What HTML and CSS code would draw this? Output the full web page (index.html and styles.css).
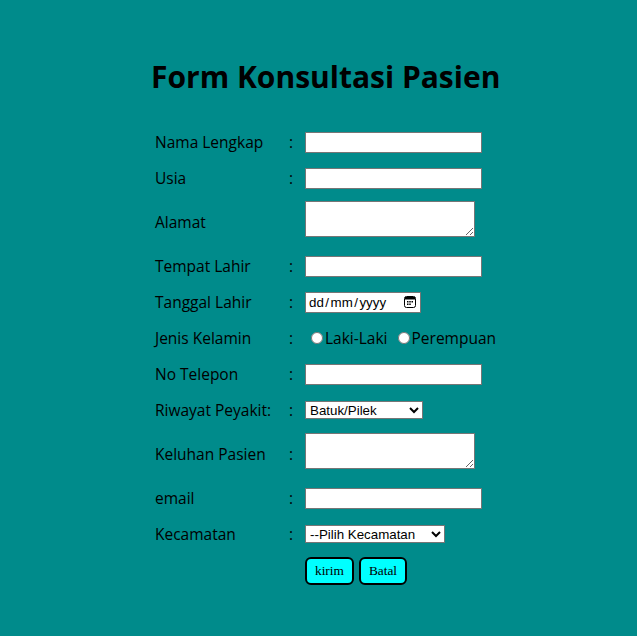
FILE: index.html
```html
<!DOCTYPE html>
<html>
<head>
<meta charset="utf-8">
<title>Form Konsultasi Pasien</title>
<link rel="stylesheet" href="styles.css">
</head>
<body>
<div class="wrap">
  <h1 class="title">Form Konsultasi Pasien</h1>
  <form class="form">
    <table class="grid">
      <tr>
        <td class="lbl">Nama Lengkap</td><td class="sep">:</td>
        <td class="fld"><input type="text" class="txt"></td>
      </tr>
      <tr>
        <td class="lbl">Usia</td><td class="sep">:</td>
        <td class="fld"><input type="text" class="txt"></td>
      </tr>
      <tr>
        <td class="lbl">Alamat</td><td class="sep"></td>
        <td class="fld area"><textarea class="ta"></textarea></td>
      </tr>
      <tr>
        <td class="lbl">Tempat Lahir</td><td class="sep">:</td>
        <td class="fld"><input type="text" class="txt"></td>
      </tr>
      <tr>
        <td class="lbl">Tanggal Lahir</td><td class="sep">:</td>
        <td class="fld">
          <div class="date" tabindex="0">
            <span class="seg">dd</span><span class="slash">/</span><span class="seg">mm</span><span class="slash">/</span><span class="seg">yyyy</span>
            <svg class="cal" width="12" height="12" viewBox="0 0 12 12">
              <rect x="0.5" y="0.5" width="11" height="11" rx="2" ry="2" fill="none" stroke="#000" stroke-width="1"/>
              <rect x="1" y="1" width="10" height="2.5" fill="#000"/>
              <rect x="3" y="5" width="1.5" height="1.5" fill="#000"/>
              <rect x="5.25" y="5" width="1.5" height="1.5" fill="#000"/>
              <rect x="7.5" y="5" width="1.5" height="1.5" fill="#000"/>
              <rect x="3" y="7.5" width="1.5" height="1.5" fill="#000"/>
              <rect x="5.25" y="7.5" width="1.5" height="1.5" fill="#000"/>
            </svg>
          </div>
        </td>
      </tr>
      <tr>
        <td class="lbl">Jenis Kelamin</td><td class="sep">:</td>
        <td class="fld radios">
          <label class="opt"><input type="radio" name="jk" class="rad">Laki-Laki</label>
          <label class="opt"><input type="radio" name="jk" class="rad">Perempuan</label>
        </td>
      </tr>
      <tr>
        <td class="lbl">No Telepon</td><td class="sep">:</td>
        <td class="fld"><input type="text" class="txt"></td>
      </tr>
      <tr>
        <td class="lbl">Riwayat Peyakit:</td><td class="sep">:</td>
        <td class="fld">
          <select class="sel sel-a">
            <option>Batuk/Pilek</option>
            <option>Demam</option>
          </select>
        </td>
      </tr>
      <tr>
        <td class="lbl">Keluhan Pasien</td><td class="sep">:</td>
        <td class="fld area"><textarea class="ta"></textarea></td>
      </tr>
      <tr>
        <td class="lbl">email</td><td class="sep">:</td>
        <td class="fld"><input type="text" class="txt"></td>
      </tr>
      <tr>
        <td class="lbl">Kecamatan</td><td class="sep">:</td>
        <td class="fld">
          <select class="sel sel-b">
            <option>--Pilih Kecamatan</option>
          </select>
        </td>
      </tr>
      <tr>
        <td class="lbl"></td><td class="sep"></td>
        <td class="fld btns">
          <button type="submit" class="btn">kirim</button>
          <button type="reset" class="btn">Batal</button>
        </td>
      </tr>
    </table>
  </form>
</div>
</body>
</html>
```

FILE: styles.css
```css
html, body {
  margin: 0;
  padding: 0;
  background: #008b8b;
}

body {
  font-family: "Comic Sans MS", "Open Sans", sans-serif;
  color: #000;
}

.wrap {
  width: fit-content;
  margin-left: 151px;
  padding-top: 55px;
}

.title {
  margin: 0 0 24px 0;
  font-size: 30px;
  line-height: 44px;
  font-weight: bold;
  text-align: center;
  white-space: nowrap;
}

.form {
  margin: 0;
}

.grid {
  border-collapse: separate;
  border-spacing: 2px;
}

.grid td {
  padding: 6px 2px;
  font-size: 15.5px;
  line-height: 22px;
  vertical-align: middle;
}

.lbl {
  width: 128px;
  min-width: 128px;
  white-space: nowrap;
}

.sep {
  width: 10px;
  min-width: 10px;
}

.fld {
  white-space: nowrap;
}

.txt {
  display: block;
  box-sizing: border-box;
  width: 177px;
  height: 21px;
  margin: 0;
  border: 1px solid #767676;
  background: #fff;
  padding: 1px 2px;
}

.grid td.area {
  padding: 4px 2px 10px 2px;
}

.ta {
  display: block;
  box-sizing: border-box;
  width: 170px;
  height: 36px;
  margin: 0;
  border: 1px solid #767676;
  resize: both;
}

.date {
  display: flex;
  align-items: center;
  box-sizing: border-box;
  width: 116px;
  height: 21px;
  margin: 0;
  padding: 0 4px 0 3px;
  border: 1px solid #767676;
  background: #fff;
  font-family: "Liberation Sans", Arial, sans-serif;
  font-size: 13.33px;
  line-height: 16px;
  color: #000;
}

.seg {
  padding-top: 1px;
}

.slash {
  padding: 1px 1.5px 0 1.5px;
}

.cal {
  display: block;
  margin-left: auto;
}

.grid td.radios {
  padding-left: 2px;
}

.opt {
  display: inline-flex;
  align-items: center;
  margin-right: 0;
}

.rad {
  width: 12px;
  height: 12px;
  margin: 0 2px 0 6px;
}

.sel {
  display: block;
  box-sizing: border-box;
  height: 18px;
  margin: 0;
  padding: 0;
  border: 1px solid #767676;
  background: #fff;
  font-family: "Liberation Sans", Arial, sans-serif;
  font-size: 13.33px;
  border-radius: 0;
  color: #000;
}

.sel-a {
  width: 118px;
}

.sel-b {
  width: 140px;
}

.grid td.btns {
  padding: 4px 2px 4px 2px;
}

.btn {
  box-sizing: border-box;
  height: 28px;
  margin: 0 1px 0 0;
  padding: 0 8px;
  border: 2px solid #000;
  border-radius: 6px;
  background: #00ffff;
  font-family: "Liberation Serif", "Times New Roman", serif;
  font-size: 13.33px;
  color: #000;
  vertical-align: top;
}
```
